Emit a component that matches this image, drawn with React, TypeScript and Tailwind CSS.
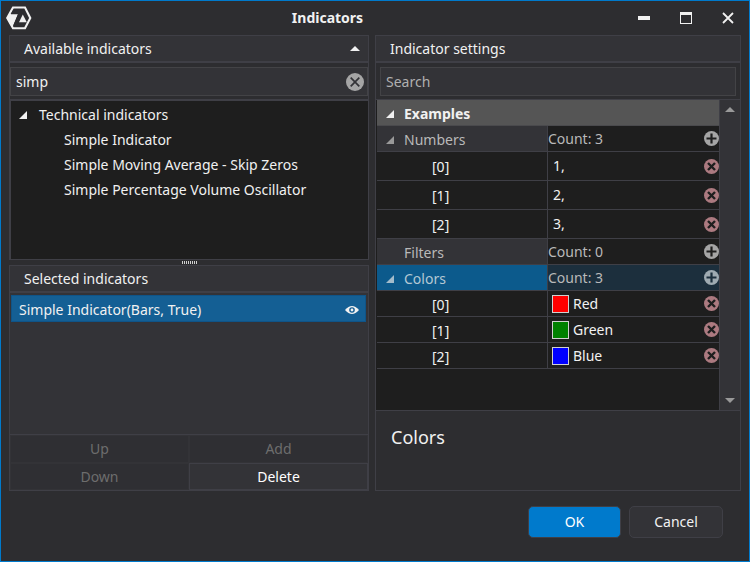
import { useState } from "react";

type Item = { value: string; swatch?: string };
type Group = { name: string; items: Item[]; tall?: boolean; selected?: boolean };

const groups: Group[] = [
  { name: "Numbers", tall: true, items: [{ value: "1," }, { value: "2," }, { value: "3," }] },
  { name: "Filters", items: [] },
  {
    name: "Colors",
    selected: true,
    items: [
      { value: "Red", swatch: "bg-[#ff0000]" },
      { value: "Green", swatch: "bg-[#008000]" },
      { value: "Blue", swatch: "bg-[#0000ff]" },
    ],
  },
];

const found = [
  "Simple Indicator",
  "Simple Moving Average - Skip Zeros",
  "Simple Percentage Volume Oscillator",
];

function Logo() {
  return (
    <svg viewBox="0 0 26 24" className="h-6 w-[26px]" aria-hidden="true">
      <path d="M7 1.500h12L24.300 12l-5.300 10.300H7L1.200 12z" fill="none" stroke="#f1f1f1" strokeWidth="2.100" />
      <path d="M1 12 3.200 8H12L7 20 5.500 20.500z" fill="#f1f1f1" />
      <path d="M6.500 4.800H18L12.200 17H14.500V19.800H7.200L12 8.200H5z" fill="#2d2d30" />
      <path d="M16.800 8.500 20.800 16.300h-7.800z" fill="#f1f1f1" />
    </svg>
  );
}

function Expander({ color = "#f1f1f1" }: { color?: string }) {
  return (
    <svg viewBox="0 0 8 8" className="h-2 w-2 shrink-0" aria-hidden="true">
      <path d="M8 0v8H0z" fill={color} />
    </svg>
  );
}

function Arrow({ down = false, color = "#999999" }: { down?: boolean; color?: string }) {
  return (
    <svg viewBox="0 0 10 5" className="h-[5px] w-[10px]" aria-hidden="true">
      <path d={down ? "M0 0h10L5 5z" : "M0 5h10L5 0z"} fill={color} />
    </svg>
  );
}

function PlusIcon({ selected = false }: { selected?: boolean }) {
  return (
    <svg viewBox="0 0 15 15" className="h-[15px] w-[15px]" aria-hidden="true">
      <circle cx="7.500" cy="7.500" r="7.500" fill={selected ? "#9fabb2" : "#a5a5a5"} />
      <path d="M7.500 2.500v10M2.500 7.500h10" stroke={selected ? "#1c2f3d" : "#1e1e1e"} strokeWidth="2.200" />
    </svg>
  );
}

function RemoveIcon() {
  return (
    <svg viewBox="0 0 15 15" className="h-[15px] w-[15px]" aria-hidden="true">
      <circle cx="7.500" cy="7.500" r="7.500" fill="#ac7a80" />
      <path d="m4 4 7 7M11 4l-7 7" stroke="#1e1e1e" strokeWidth="2.400" />
    </svg>
  );
}

function PanelHeader({ title, children }: { title: string; children?: React.ReactNode }) {
  return (
    <header className="flex h-[27px] shrink-0 items-center justify-between border-b-2 border-[#3f3f46] bg-[#333337] pr-2 pl-3.5">
      <h2>{title}</h2>
      {children}
    </header>
  );
}

function PropertyGroup({ group }: { group: Group }) {
  const line = "border-b border-[#3f3f46]";
  return (
    <>
      <tr className="h-[26px]">
        <th
          scope="row"
          className={`${line} border-r px-0 pt-0.5 pb-0 text-left font-normal ${group.selected ? "bg-[#0c5a8c] text-[#b4c8d4]" : "bg-[#333337] text-[#b9b9b9]"}`}
        >
          <div className="flex items-center gap-2.5 pl-[9px]">
            {group.items.length > 0 ? (
              <Expander color={group.selected ? "#a3bccb" : "#999999"} />
            ) : (
              <span className="w-2" />
            )}
            {group.name}
          </div>
        </th>
        <td className={`${line} p-0 ${group.selected ? "bg-[#1c2f3d]" : ""}`}>
          <div className="flex items-center justify-between text-[#b9b9b9]">
            Count: {group.items.length}
            <button type="button" aria-label={`Add to ${group.name}`}>
              <PlusIcon selected={group.selected} />
            </button>
          </div>
        </td>
      </tr>
      {group.items.map((item, i) => (
        <tr key={item.value} className={group.tall ? "h-[29px]" : "h-[26px]"}>
          <th scope="row" className={`${line} border-r pt-0.5 pr-0 pb-0 pl-[55px] text-left font-normal`}>
            [{i}]
          </th>
          <td className={`${line} p-0`}>
            <div className="flex items-center pl-1">
              {item.swatch && <span className={`mr-1 h-[18px] w-[17px] shrink-0 border border-[#d0d0d0] ${item.swatch}`} />}
              <input
                aria-label={`${group.name} ${i}`}
                defaultValue={item.value}
                className={`h-5 w-full min-w-0 flex-1 bg-transparent outline-none ${item.swatch ? "" : "pl-px"}`}
              />
              <button type="button" aria-label={`Remove ${group.name} ${i}`}>
                <RemoveIcon />
              </button>
            </div>
          </td>
        </tr>
      ))}
    </>
  );
}

export default function App() {
  const [query, setQuery] = useState("simp");
  return (
    <div className="flex min-h-screen flex-col border border-[#007acc] bg-[#2d2d30] font-['Noto_Sans','Open_Sans',sans-serif] text-[14px] leading-5 text-[#f1f1f1]">
      <div className="flex h-[34px] shrink-0 items-center pl-[5px]">
        <Logo />
        <h1 className="flex-1 text-center font-bold">Indicators</h1>
        <div className="flex items-center">
          <button type="button" aria-label="Minimize" className="px-[15px]">
            <svg viewBox="0 0 12 12" className="h-3 w-3"><path d="M0 4h12v4H0z" fill="#f1f1f1" /></svg>
          </button>
          <button type="button" aria-label="Maximize" className="px-[15px]">
            <svg viewBox="0 0 12 12" className="h-3 w-3"><path d="M0 0h12v12H0zM1 3v8h10V3z" fill="#f1f1f1" fillRule="evenodd" /></svg>
          </button>
          <button type="button" aria-label="Close" className="px-[15px]">
            <svg viewBox="0 0 12 12" className="h-3 w-3"><path d="m1 1 10 10M11 1 1 11" stroke="#f1f1f1" strokeWidth="1.800" /></svg>
          </button>
        </div>
      </div>

      <main className="grid flex-1 grid-cols-[360fr_366fr] gap-1.5 px-2">
        <div className="grid min-w-0 grid-rows-[225fr_5px_226fr]">
          <section className="flex flex-col border border-[#3f3f46]">
            <PanelHeader title="Available indicators">
              <button type="button" aria-label="Collapse">
                <Arrow color="#f1f1f1" />
              </button>
            </PanelHeader>
            <div className="mt-1 mb-[3px] flex h-[29px] items-center border border-[#434346] bg-[#333337] pr-[3px] pl-[5px]">
              <input
                aria-label="Find indicator"
                value={query}
                onChange={(e) => setQuery(e.target.value)}
                className="w-full min-w-0 flex-1 bg-transparent outline-none"
              />
              <button type="button" aria-label="Clear" onClick={() => setQuery("")}>
                <svg viewBox="0 0 18 18" className="h-[18px] w-[18px]">
                  <circle cx="9" cy="9" r="9" fill="#a5a5a5" />
                  <path d="m4.700 4.700 8.600 8.600M13.300 4.700l-8.600 8.600" stroke="#333337" strokeWidth="1.700" />
                </svg>
              </button>
            </div>
            <div className="flex-1 border-t-2 border-l border-[#3f3f46] bg-[#1e1e1e] pt-px pl-2">
              <div className="flex h-[25px] items-center gap-3">
                <Expander />
                <span>Technical indicators</span>
              </div>
              <ul className="pl-[45px]">
                {found.map((name) => (
                  <li key={name} className="flex h-[25px] items-center">{name}</li>
                ))}
              </ul>
            </div>
          </section>

          <div className="flex items-center justify-center gap-px">
            {[0, 1, 2, 3, 4, 5, 6, 7].map((n) => (
              <span key={n} className="h-[3px] w-px bg-[#d0d0d0]" />
            ))}
          </div>

          <section className="flex flex-col border border-[#3f3f46] bg-[#333337]">
            <PanelHeader title="Selected indicators" />
            <div className="flex-1 pt-0.5 pr-0.5 pl-px">
              <div className="flex h-[27px] items-center justify-between border border-[#0f5488] bg-[#145f94] pt-0.5 pr-1.5 pl-[7px]">
                <span>Simple Indicator(Bars, True)</span>
                <button type="button" aria-label="Toggle visibility">
                  <svg viewBox="0 0 14 8" className="h-2 w-3.5">
                    <path d="M0 4Q7-4 14 4 7 12 0 4z" fill="#f1f1f1" />
                    <circle cx="7" cy="4" r="2.800" fill="#145f94" />
                    <circle cx="7" cy="4" r="1.400" fill="#f1f1f1" />
                  </svg>
                </button>
              </div>
            </div>
            <div className="grid grid-cols-2 border-t border-[#3f3f46] bg-[#2f2f33]">
              <button type="button" disabled className="h-7 border border-[#333337] text-[#6d6d6d]">Up</button>
              <button type="button" disabled className="h-7 border border-[#333337] text-[#6d6d6d]">Add</button>
              <button type="button" disabled className="h-[27px] border border-[#333337] text-[#6d6d6d]">Down</button>
              <button type="button" className="h-[27px] border border-[#3f3f46] bg-[#333337] text-white">Delete</button>
            </div>
          </section>
        </div>

        <section className="flex min-w-0 flex-col border border-[#3f3f46]">
          <PanelHeader title="Indicator settings" />
          <input
            type="text"
            aria-label="Search settings"
            placeholder="Search"
            className="mx-1 mt-1 mb-[3px] h-[29px] border border-[#434346] bg-[#333337] px-[5px] outline-none placeholder:text-[#b0b0b0] placeholder:opacity-100"
          />
          <div className="flex flex-1 border-y border-[#3f3f46] bg-[#1e1e1e] pl-px">
            <div className="min-w-0 flex-1">
              <table className="w-full table-fixed border-separate border-spacing-0">
                <thead>
                  <tr className="h-[26px]">
                    <th colSpan={2} className="border-b border-[#4a4a4d] bg-[#555555] px-0 pt-0.5 pb-0 text-left font-bold">
                      <div className="flex items-center gap-2.5 pl-[9px]">
                        <Expander />
                        Examples
                      </div>
                    </th>
                  </tr>
                </thead>
                <tbody>
                  {groups.map((group) => (
                    <PropertyGroup key={group.name} group={group} />
                  ))}
                </tbody>
              </table>
            </div>
            <div className="flex w-[21px] flex-col items-center justify-between border-l border-[#3f3f46] bg-[#333337] py-[7px]">
              <button type="button" aria-label="Scroll up" className="flex"><Arrow /></button>
              <button type="button" aria-label="Scroll down" className="flex"><Arrow down /></button>
            </div>
          </div>
          <div className="h-[79px] px-[15px] pt-3.5">
            <h3 className="text-[18px] leading-6">Colors</h3>
          </div>
        </section>
      </main>

      <footer className="flex h-[70px] shrink-0 items-start justify-end gap-2 pt-[15px] pr-[26px]">
        <button type="button" className="h-8 w-[93px] rounded-[5px] border border-[#3f3f46] bg-[#007acc] text-white">OK</button>
        <button type="button" className="h-8 w-[94px] rounded-[5px] border border-[#3f3f46] bg-[#333337]">Cancel</button>
      </footer>
    </div>
  );
}
